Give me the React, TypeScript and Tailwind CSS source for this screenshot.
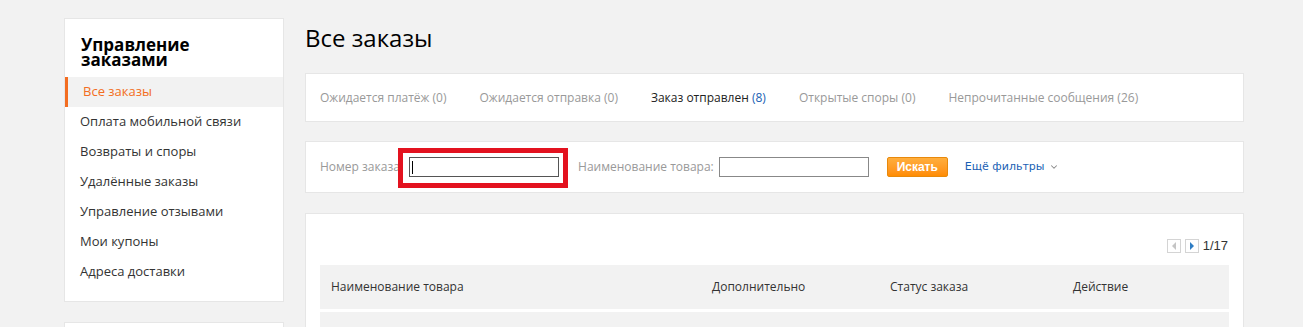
import { ChevronDown } from 'lucide-react';

const menu = [
  'Оплата мобильной связи',
  'Возвраты и споры',
  'Удалённые заказы',
  'Управление отзывами',
  'Мои купоны',
  'Адреса доставки',
];

const tabs = [
  { label: 'Ожидается платёж', count: 0 },
  { label: 'Ожидается отправка', count: 0 },
  { label: 'Заказ отправлен', count: 8, active: true },
  { label: 'Открытые споры', count: 0 },
  { label: 'Непрочитанные сообщения', count: 26 },
];

export default function App() {
  return (
    <div className="min-h-[327px] bg-[#f2f2f2] font-['Open_Sans',sans-serif] text-[#333]">
      <div className="ml-[64px] flex gap-[21px] pt-[18px]">
        {/* sidebar */}
        <div className="flex w-[220px] flex-col gap-[20px]">
          <div className="border border-[#e6e6e6] bg-white pb-[14px]">
            <h2 className="px-[16px] pt-[18px] pb-[10px] text-[17px] font-bold leading-[15px] text-black">
              Управление заказами
            </h2>
            <div className="flex h-[30px] items-center border-l-[3px] border-[#f36d21] bg-[#f2f2f2] pl-[15px] text-[13px] text-[#f36d21]">
              Все заказы
            </div>
            {menu.map((m) => (
              <div key={m} className="flex h-[30px] items-center pl-[15px] text-[13px] text-[#333]">
                {m}
              </div>
            ))}
          </div>
          <div className="h-[40px] border border-[#e6e6e6] bg-white" />
        </div>

        {/* main */}
        <div className="w-[939px]">
          <h1 className="h-[55px] text-[24px] leading-[40px] text-black">Все заказы</h1>

          <div className="flex h-[49px] items-center gap-[33px] border border-[#e6e6e6] bg-white pl-[14px] text-[12px]">
            {tabs.map((t) => (
              <span key={t.label} className={t.active ? 'text-[#222]' : 'text-[#999]'}>
                {t.label} <span className={t.active ? 'text-[#1a5fb4]' : ''}>({t.count})</span>
              </span>
            ))}
          </div>

          <div className="mt-[19px] flex h-[52px] items-center border border-[#e6e6e6] bg-white pl-[14px] text-[12px]">
            <span className="text-[#999]">Номер заказа:</span>
            <div className="relative ml-[6px]">
              <div className="h-[20px] w-[150px] border border-[#555] bg-white pl-[2px]">
                <div className="mt-[3px] h-[13px] w-px bg-black" />
              </div>
              <div className="absolute -top-[9px] -left-[11px] h-[40px] w-[170px] border-[5px] border-[#e3121f]" />
            </div>
            <span className="ml-[19px] text-[#999]">Наименование товара:</span>
            <div className="ml-[5px] h-[20px] w-[150px] border border-[#888] bg-white" />
            <button className="ml-[18px] h-[20px] w-[61px] rounded-[2px] border border-[#e8890b] bg-gradient-to-b from-[#ffae3c] to-[#ff8c00] font-['Liberation_Sans',sans-serif] text-[12px] font-bold text-white">
              Искать
            </button>
            <span className="ml-[17px] flex items-center gap-[5px] font-['DejaVu_Sans',sans-serif] text-[11px] text-[#1a5fb4]">
              Ещё фильтры
              <ChevronDown size={10} className="text-[#888]" strokeWidth={2.5} />
            </span>
          </div>

          <div className="mt-[20px] h-[120px] border border-[#e6e6e6] bg-white px-[14px] pt-[25px]">
            <div className="flex h-[14px] items-center justify-end gap-[4px] pr-[1px]">
              <span className="flex h-[14px] w-[14px] items-center justify-center border border-[#d4d4d4] bg-white">
                <span className="h-0 w-0 border-y-[4px] border-r-[4px] border-y-transparent border-r-[#c5c5c5]" />
              </span>
              <span className="flex h-[14px] w-[14px] items-center justify-center border border-[#d4d4d4] bg-white">
                <span className="h-0 w-0 border-y-[4px] border-l-[4px] border-y-transparent border-l-[#2f7dc4]" />
              </span>
              <span className="font-['Liberation_Sans',sans-serif] text-[13px] text-[#333]">1/17</span>
            </div>
            <div className="mt-[12px] flex h-[44px] items-center bg-[#f2f2f2] text-[12px] text-[#333]">
              <span className="w-[392px] pl-[11px]">Наименование товара</span>
              <span className="w-[178px]">Дополнительно</span>
              <span className="w-[183px]">Статус заказа</span>
              <span>Действие</span>
            </div>
            <div className="mt-[3px] h-[40px] bg-[#f2f2f2]" />
          </div>
        </div>
      </div>
    </div>
  );
}
